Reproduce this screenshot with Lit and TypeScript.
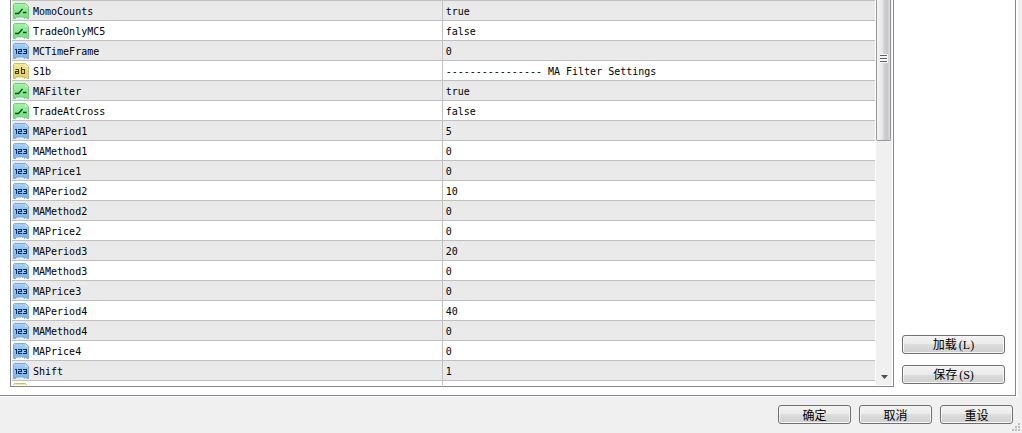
import { LitElement, html, css, svg } from "lit";
import { customElement, property } from "lit/decorators.js";

type Kind = "bool" | "int" | "text";
interface Param {
  kind: Kind;
  name: string;
  value: string;
}

const PARAMS: Param[] = [
  { kind: "bool", name: "MomoCounts", value: "true" },
  { kind: "bool", name: "TradeOnlyMC5", value: "false" },
  { kind: "int", name: "MCTimeFrame", value: "0" },
  { kind: "text", name: "S1b", value: "---------------- MA Filter Settings" },
  { kind: "bool", name: "MAFilter", value: "true" },
  { kind: "bool", name: "TradeAtCross", value: "false" },
  { kind: "int", name: "MAPeriod1", value: "5" },
  { kind: "int", name: "MAMethod1", value: "0" },
  { kind: "int", name: "MAPrice1", value: "0" },
  { kind: "int", name: "MAPeriod2", value: "10" },
  { kind: "int", name: "MAMethod2", value: "0" },
  { kind: "int", name: "MAPrice2", value: "0" },
  { kind: "int", name: "MAPeriod3", value: "20" },
  { kind: "int", name: "MAMethod3", value: "0" },
  { kind: "int", name: "MAPrice3", value: "0" },
  { kind: "int", name: "MAPeriod4", value: "40" },
  { kind: "int", name: "MAMethod4", value: "0" },
  { kind: "int", name: "MAPrice4", value: "0" },
  { kind: "int", name: "Shift", value: "1" },
  { kind: "text", name: "", value: "" },
];

const COLORS: Record<Kind, { top: string; bottom: string; edge: string; ink: string }> = {
  bool: { top: "#a4f0a8", bottom: "#74de80", edge: "#5cc46c", ink: "#0a4a18" },
  int: { top: "#a8d0f6", bottom: "#78b2ea", edge: "#6a9fd4", ink: "#0b2f5a" },
  text: { top: "#f3e99c", bottom: "#e0cf62", edge: "#c2ae4a", ink: "#4a3c06" },
};

const GLYPHS: Record<Kind, unknown> = {
  bool: svg`<path d="M2 10.5H5.5L9.5 6M10 9.5H13.5" stroke-width="1.3" />`,
  int: svg`<path shape-rendering="crispEdges" d="M2 6.5H4M3.5 6V11M5 6.5H8.5V8.5H5.5V10.5H9M10 6.5H13.5V10.5H10M11 8.5H13" />`,
  text: svg`<path d="M2.5 6.5H5.5V10.5H2.5V8.5H5.5M8.5 4V10.5H11.5V6.5H8.5" stroke-width="1.1" />`,
};

@customElement("type-icon")
export class TypeIcon extends LitElement {
  @property() kind: Kind = "int";

  static styles = css`
    :host {
      display: block;
      flex: none;
      width: 16px;
      height: 16px;
    }
    .icon {
      display: block;
      width: 100%;
      height: 100%;
    }
  `;

  render() {
    const c = COLORS[this.kind];
    return html`<svg class="icon" viewBox="0 0 16 16" aria-hidden="true">
      <defs>
        <linearGradient id="g" x1="0" y1="0" x2="0" y2="1">
          <stop offset="0" stop-color=${c.top} />
          <stop offset="1" stop-color=${c.bottom} />
        </linearGradient>
      </defs>
      <path
        d="M1.5 .5H12.5L15.5 3.5V15.5H14L12.5 14L11.5 15.5L10.5 13.5L9.5 14.5L8.5 13L7 14.5L6 13L5 14.5L4 13.5L2.5 15.5H.5V1.5Z"
        fill="url(#g)"
        stroke=${c.edge}
        stroke-width=".8"
      />
      <path d="M12 1L15 4H12Z" fill="#fff" fill-opacity=".4" />
      <g fill="none" stroke=${c.ink}>${GLYPHS[this.kind]}</g>
    </svg>`;
  }
}

@customElement("app-root")
export class AppRoot extends LitElement {
  static styles = css`
    :host {
      display: flex;
      flex-direction: column;
      height: 100vh;
      box-sizing: border-box;
      overflow: hidden;
      background: #f0f0f0;
      color: #000;
      font: 10px/17px "DejaVu Sans Mono", "Noto Sans CJK SC", monospace;
    }
    .page {
      flex: 1;
      min-height: 0;
      display: flex;
      margin-right: 4px;
      padding: 0 2px 1px 0;
      background: #fff;
    }
    .panel {
      flex: 1;
      min-width: 0;
      display: flex;
      gap: 8px;
      padding: 0 10px 8px;
      border: solid #828790;
      border-width: 0 1px 1px 0;
    }
    .list {
      flex: 1;
      min-width: 0;
      display: flex;
      box-sizing: border-box;
      overflow: hidden;
      padding: 0 1px 1px 1px;
      border: solid #828790;
      border-width: 0 1px 1px 1px;
    }
    .rows {
      flex: 1;
      min-width: 0;
      overflow: hidden;
    }
    .grid {
      width: 100%;
      table-layout: fixed;
      border-collapse: separate;
      border-spacing: 0;
    }
    .cell {
      box-sizing: border-box;
      height: 20px;
      padding: 0;
      border-top: 1px solid #c0c0c0;
      font-weight: normal;
      text-align: left;
      white-space: nowrap;
    }
    .row:nth-child(odd) .cell {
      background: #eaeaea;
    }
    .name {
      width: 49.9%;
      border-right: 1px solid #c0c0c0;
    }
    .label {
      display: flex;
      align-items: center;
      gap: 4px;
      height: 19px;
      padding-left: 1px;
    }
    .text {
      display: block;
      padding-top: 2px;
    }
    .value {
      padding-left: 3px;
    }
    .scroll {
      flex: none;
      display: flex;
      flex-direction: column;
      justify-content: space-between;
      width: 16px;
      margin-left: 1px;
      background: #f0f0f0;
    }
    .thumb {
      display: flex;
      align-items: center;
      justify-content: center;
      box-sizing: border-box;
      width: 15px;
      height: 141px;
      padding-bottom: 24px;
      border: solid #979797;
      border-width: 0 1px 1px 1px;
      border-radius: 0 0 2px 2px;
      background: linear-gradient(90deg, #f5f5f5, #e4e4e6 45%, #cfcfd4 55%, #c6c6cc 80%, #dcdce0);
    }
    .down {
      display: flex;
      align-items: center;
      justify-content: center;
      height: 17px;
    }
    .side {
      flex: none;
      display: flex;
      flex-direction: column;
      justify-content: flex-end;
      gap: 11px;
      width: 103px;
      padding-bottom: 3px;
    }
    .footer {
      flex: none;
      display: flex;
      justify-content: flex-end;
      gap: 8px;
      position: relative;
      padding: 8px 9px 9px;
    }
    .button {
      box-sizing: border-box;
      height: 19px;
      padding: 0;
      border: 1px solid #707070;
      border-radius: 3px;
      background: linear-gradient(#f2f2f2, #ebebeb 50%, #dddddd 50%, #cfcfcf);
      box-shadow: inset 0 0 0 1px #f6f6f6;
      color: #000;
      font: 12px/16px "Noto Sans CJK SC", sans-serif;
    }
    .key {
      margin-left: 2px;
      font: 12px/16px "Liberation Serif", serif;
    }
    .small {
      width: 73px;
    }
    .grip {
      position: absolute;
      right: 2px;
      bottom: 2px;
    }
  `;

  render() {
    return html`
      <main class="page">
        <div class="panel">
          <div class="list">
            <div class="rows">
              <table class="grid">
                <tbody>
                  ${PARAMS.map(
                    (p) => html`<tr class="row">
                      <th class="cell name" scope="row">
                        <div class="label">
                          <type-icon .kind=${p.kind}></type-icon>
                          <span class="text">${p.name}</span>
                        </div>
                      </th>
                      <td class="cell value"><span class="text">${p.value}</span></td>
                    </tr>`
                  )}
                </tbody>
              </table>
            </div>
            <div class="scroll">
              <div class="thumb">
                <svg width="8" height="9" viewBox="0 0 8 9" aria-hidden="true">
                  <path d="M0 1.5H8M0 4.5H8M0 7.5H8" stroke="#f4f4f4" stroke-width="3" />
                  <path d="M0 1.5H7M0 4.5H7M0 7.5H7" stroke="#606060" />
                </svg>
              </div>
              <div class="down">
                <svg width="7" height="4" viewBox="0 0 7 4" aria-hidden="true">
                  <path d="M0 0H7L3.5 4Z" fill="#505050" />
                </svg>
              </div>
            </div>
          </div>
          <div class="side">
            <button class="button">加载<span class="key">(L)</span></button>
            <button class="button">保存<span class="key">(S)</span></button>
          </div>
        </div>
      </main>
      <footer class="footer">
        <button class="button small">确定</button>
        <button class="button small">取消</button>
        <button class="button small">重设</button>
        <svg class="grip" width="8" height="8" viewBox="0 0 8 8" aria-hidden="true">
          <path d="M6 0h2v2h-2zM3 3h2v2h-2zM6 3h2v2h-2zM0 6h2v2h-2zM3 6h2v2h-2zM6 6h2v2h-2z" fill="#c0c0c0" />
        </svg>
      </footer>
    `;
  }
}
